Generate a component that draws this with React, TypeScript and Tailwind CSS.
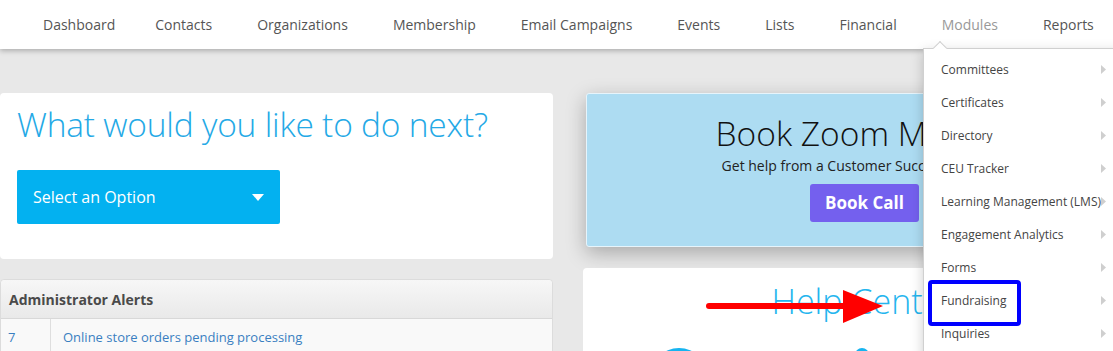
import React from "react";

const navItems = [
  "Dashboard",
  "Contacts",
  "Organizations",
  "Membership",
  "Email Campaigns",
  "Events",
  "Lists",
  "Financial",
  "Modules",
  "Reports",
];

const menuItems = [
  "Committees",
  "Certificates",
  "Directory",
  "CEU Tracker",
  "Learning Management (LMS)",
  "Engagement Analytics",
  "Forms",
  "Fundraising",
  "Inquiries",
];

export default function App() {
  return (
    <div
      className="relative w-[1113px] h-[351px] overflow-hidden bg-[#e8e8e8]"
      style={{ fontFamily: '"Open Sans", "Liberation Sans", sans-serif' }}
    >
      {/* Top nav */}
      <div className="relative z-10 h-[49px] bg-white shadow-[0_2px_5px_rgba(0,0,0,0.25)] flex items-center pl-[43px] gap-[45px] whitespace-nowrap">
        {navItems.map((n, i) => (
          <span
            key={n}
            className={`text-[14px] ${n === "Modules" ? "text-[#999]" : "text-[#555]"} ${i === 0 ? "-mr-[5px]" : ""}`}
          >
            {n}
          </span>
        ))}
      </div>

      {/* Main content */}
      <div className="flex gap-[30px] pt-[44px] w-[1200px]">
        {/* Left column */}
        <div className="w-[553px] flex flex-col gap-[20px] shrink-0">
          <div className="h-[166px] bg-white rounded-[4px] pl-[17px] pt-[8px]">
            <div className="text-[33.5px] leading-[46px] font-light text-[#24a9e6] tracking-[-0.2px] whitespace-nowrap">
              What would you like to do next?
            </div>
            <div className="mt-[23px] w-[263px] h-[54px] bg-[#03b1f0] rounded-[2px] flex items-center justify-between pl-[16px] pr-[16px]">
              <span className="text-white text-[16px]">Select an Option</span>
              <svg width="12" height="7" viewBox="0 0 12 7">
                <path d="M0 0 L12 0 L6 7 Z" fill="#fff" />
              </svg>
            </div>
          </div>

          <div className="bg-[#f9f9f9] border border-[#dcdcdc] rounded-t-[4px]">
            <div className="h-[39px] flex items-center pl-[8px] border-b border-[#d8d8d8] bg-gradient-to-b from-[#f7f7f7] to-[#e9e9e9] rounded-t-[4px]">
              <span className="text-[14px] font-bold text-[#4a4a4a]">Administrator Alerts</span>
            </div>
            <div className="flex h-[40px]">
              <div className="w-[50px] border-r border-[#dedede] pl-[7px] pt-[9px] text-[13px] text-[#3a7fc1]">
                7
              </div>
              <div className="pl-[12px] pt-[9px] text-[13px] text-[#3a7fc1]">
                Online store orders pending processing
              </div>
            </div>
          </div>
        </div>

        {/* Right column */}
        <div className="w-[560px] flex flex-col gap-[21px] shrink-0">
          <div className="ml-[3px] mr-[-6px] h-[154px] bg-[#addcf2] border border-[#e6f4fb] rounded-[3px] shadow-[0_6px_20px_rgba(0,0,0,0.28)] flex flex-col items-center pt-[17px] whitespace-nowrap">
            <div className="text-[33.5px] leading-[44px] font-light text-[#111]">Book Zoom Meeting</div>
            <div className="text-[14px] leading-[18px] text-[#222] mt-[2px] -ml-[3px]">
              Get help from a Customer Success Specialist
            </div>
            <div className="mt-[9px] -ml-[6px] w-[109px] h-[38px] bg-[#7460ee] rounded-[3px] flex items-center justify-center text-white font-bold text-[17px]">
              Book Call
            </div>
          </div>

          <div className="relative h-[120px] bg-white rounded-[4px] flex flex-col items-center pt-[10px]">
            <div className="text-[34px] leading-[46px] font-light text-[#24b5ee]">Help Center</div>
            <div className="absolute left-[67px] top-[80px] w-[58px] h-[58px] rounded-full bg-[#16b4f0]" />
            <div className="absolute left-[272px] top-[80px] w-[14px] h-[14px] rounded-full bg-[#16b4f0]" />
          </div>
        </div>
      </div>

      {/* Dropdown menu */}
      <div className="absolute z-20 left-[923px] top-[48px] w-[200px] h-[320px] bg-white border-l border-t border-[#d0d0d0] shadow-[0_4px_12px_rgba(0,0,0,0.2)] pt-[4px]">
        <div className="absolute -top-[6px] left-[11px] w-[10px] h-[10px] bg-white border-l border-t border-[#d0d0d0] rotate-45" />
        {menuItems.map((m) => (
          <div key={m} className="relative h-[33px] flex items-center pl-[17px] text-[12px] text-[#444] whitespace-nowrap">
            {m}
            <svg className="absolute left-[177px] top-[12px]" width="5" height="9" viewBox="0 0 5 9">
              <path d="M0 0 L5 4.5 L0 9 Z" fill="#cfcfcf" />
            </svg>
          </div>
        ))}
      </div>

      {/* Blue highlight box */}
      <div className="absolute z-30 left-[928px] top-[280px] w-[93px] h-[46px] border-[4px] border-[#0000ff] rounded-[4px]" />

      {/* Red arrow */}
      <svg className="absolute z-30 left-[700px] top-[285px]" width="190" height="45" viewBox="0 0 190 45">
        <line x1="9" y1="21" x2="150" y2="21" stroke="#ff0000" strokeWidth="6" strokeLinecap="round" />
        <path d="M143 5 L183 21 L143 38 Z" fill="#ff0000" />
      </svg>
    </div>
  );
}
